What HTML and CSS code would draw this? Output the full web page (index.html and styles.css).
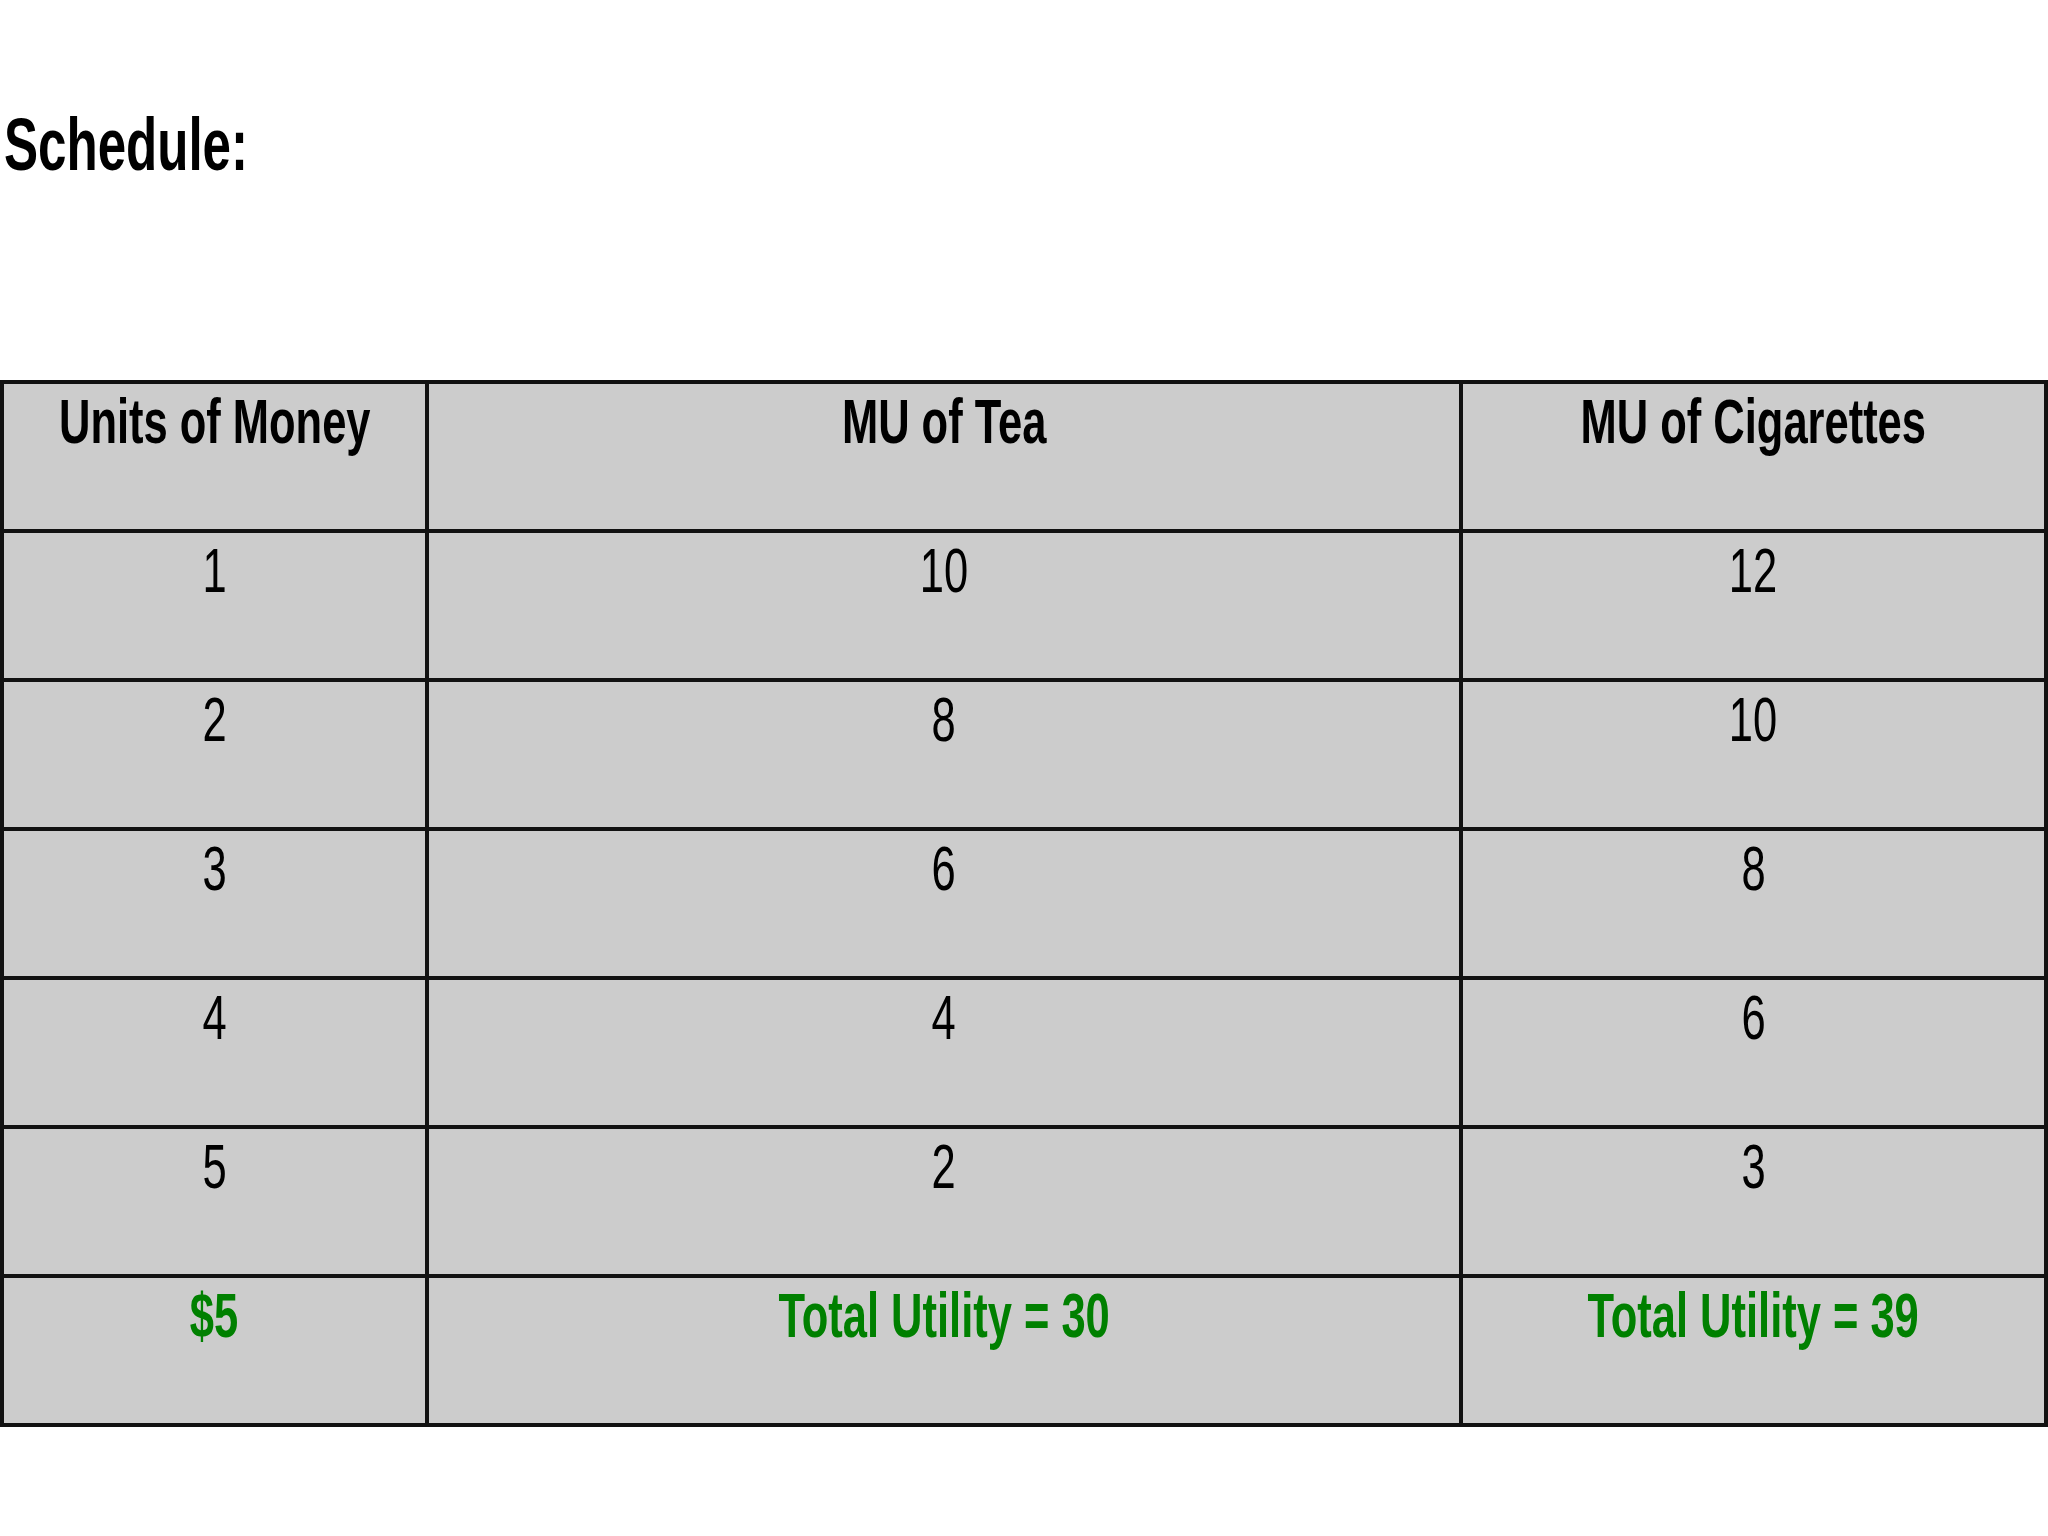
FILE: index.html
```html
<!DOCTYPE html>
<html>
<head>
<meta charset="utf-8">
<link rel="stylesheet" href="styles.css">
</head>
<body>
<h1 class="title"><span class="sq">Schedule:</span></h1>
<div class="schedule">
  <div class="cell head"><span class="sq">Units of Money</span></div>
  <div class="cell head"><span class="sq">MU of Tea</span></div>
  <div class="cell head"><span class="sq">MU of Cigarettes</span></div>

  <div class="cell"><span class="sq">1</span></div>
  <div class="cell"><span class="sq">10</span></div>
  <div class="cell"><span class="sq">12</span></div>

  <div class="cell"><span class="sq">2</span></div>
  <div class="cell"><span class="sq">8</span></div>
  <div class="cell"><span class="sq">10</span></div>

  <div class="cell"><span class="sq">3</span></div>
  <div class="cell"><span class="sq">6</span></div>
  <div class="cell"><span class="sq">8</span></div>

  <div class="cell"><span class="sq">4</span></div>
  <div class="cell"><span class="sq">4</span></div>
  <div class="cell"><span class="sq">6</span></div>

  <div class="cell"><span class="sq">5</span></div>
  <div class="cell"><span class="sq">2</span></div>
  <div class="cell"><span class="sq">3</span></div>

  <div class="cell total"><span class="sq">$5</span></div>
  <div class="cell total"><span class="sq">Total Utility = 30</span></div>
  <div class="cell total"><span class="sq">Total Utility = 39</span></div>
</div>
</body>
</html>
```
FILE: styles.css
```css
html, body {
  margin: 0;
  padding: 0;
  background: #ffffff;
}
body {
  font-family: "Liberation Sans", Arial, sans-serif;
  color: #000;
  width: 2048px;
  height: 1536px;
  overflow: hidden;
}
.sq {
  display: inline-block;
  flex: none;
  transform: scaleX(0.69);
  transform-origin: center top;
  white-space: nowrap;
}
.title {
  margin: 108px 0 0 4px;
  font-size: 74px;
  line-height: 74px;
  font-weight: bold;
}
.title .sq {
  transform-origin: left top;
}
.schedule {
  margin-top: 198px;
  display: grid;
  grid-template-columns: 421px 1030px 581px;
  grid-auto-rows: 145px;
  gap: 4px;
  padding: 4px;
  background: #111111;
}
.cell {
  background: #cccccc;
  display: flex;
  justify-content: center;
  align-items: flex-start;
  font-size: 63px;
  line-height: 63px;
  padding-top: 6px;
  box-sizing: border-box;
  overflow: hidden;
}
.head {
  font-weight: bold;
}
.total {
  font-weight: bold;
  color: #008000;
}
```
